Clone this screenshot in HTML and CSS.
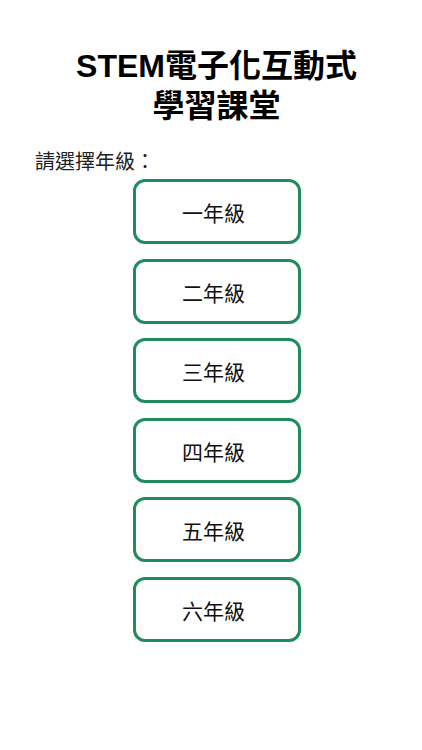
FILE: index.html
```html
<!DOCTYPE html>
<html lang="zh-Hant">
<head>
<meta charset="utf-8">
<title>STEM電子化互動式學習課堂</title>
<link rel="stylesheet" href="styles.css">
</head>
<body>
<main class="page">
  <h1 class="title">STEM電子化互動式<br>學習課堂</h1>
  <p class="label">請選擇年級：</p>
  <div class="grades">
    <button class="grade">一年級</button>
    <button class="grade">二年級</button>
    <button class="grade">三年級</button>
    <button class="grade">四年級</button>
    <button class="grade">五年級</button>
    <button class="grade">六年級</button>
  </div>
</main>
</body>
</html>
```
FILE: styles.css
```css
html, body {
  margin: 0;
  padding: 0;
  background: #ffffff;
}
body {
  font-family: "Liberation Sans", "Noto Sans CJK TC", sans-serif;
  color: #111111;
}
.page {
  padding: 46px 0 0 11px;
}
.title {
  margin: 0;
  text-align: center;
  font-size: 32px;
  line-height: 40px;
  font-weight: bold;
  color: #000000;
}
.label {
  margin: 24px 0 0 0;
  padding-left: 24px;
  font-size: 20px;
  line-height: 24px;
  color: #222222;
}
.grades {
  margin-top: 5px;
  display: flex;
  flex-direction: column;
  align-items: center;
  gap: 14.5px;
}
.grade {
  box-sizing: border-box;
  width: 168px;
  height: 65px;
  border: 3px solid #1e8c5e;
  border-radius: 12px;
  background: #ffffff;
  font-family: "Liberation Sans", "Noto Sans CJK TC", sans-serif;
  font-size: 21px;
  color: #111111;
  padding: 1px 6px 0 0;
  cursor: pointer;
}
```
